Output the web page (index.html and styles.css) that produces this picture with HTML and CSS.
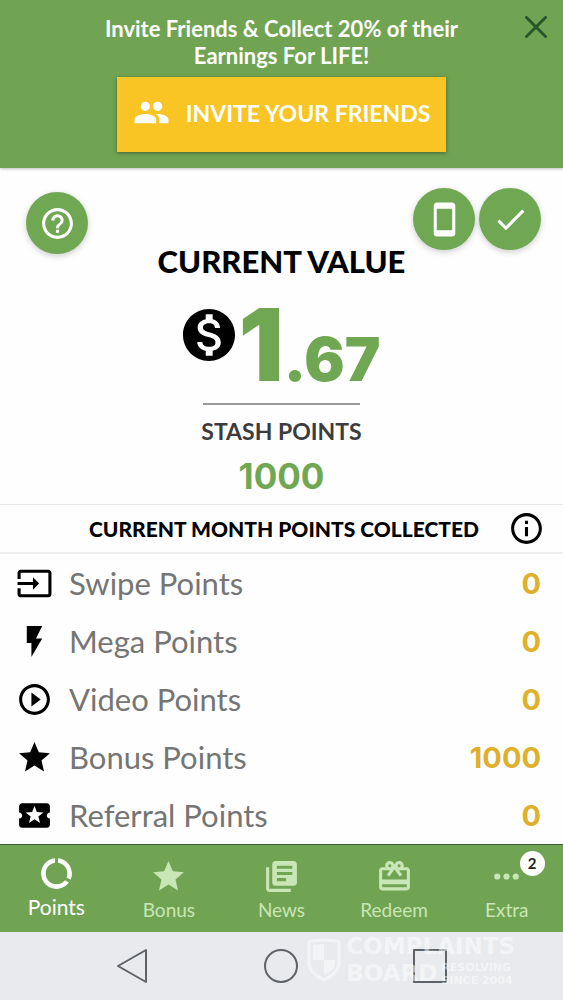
FILE: index.html
```html
<!DOCTYPE html>
<html lang="en">
<head>
<meta charset="utf-8">
<meta name="viewport" content="width=device-width, initial-scale=1">
<title>Points</title>
<link rel="stylesheet" href="styles.css">
</head>
<body>
<svg class="sprite" aria-hidden="true">
  <symbol id="star" viewBox="0 0 24 24"><path d="M12 17.27L18.18 21l-1.64-7.03L22 9.24l-7.19-.61L12 2 9.19 8.63 2 9.24l5.46 4.73L5.82 21z"/></symbol>
</svg>

<header class="promo">
  <p class="promo-text">Invite Friends &amp; Collect 20% of their Earnings For LIFE!</p>
  <button class="invite" type="button">
    <svg class="icon" viewBox="0 0 24 24" aria-hidden="true"><path d="M16 11c1.66 0 2.99-1.34 2.99-3S17.66 5 16 5c-1.66 0-3 1.34-3 3s1.34 3 3 3zm-8 0c1.66 0 2.99-1.34 2.99-3S9.66 5 8 5C6.34 5 5 6.34 5 8s1.34 3 3 3zm0 2c-2.33 0-7 1.17-7 3.5V19h14v-2.5c0-2.33-4.67-3.5-7-3.5zm8 0c-.29 0-.62.02-.97.05 1.16.84 1.97 1.97 1.97 3.45V19h6v-2.5c0-2.33-4.67-3.5-7-3.5z"/></svg>
    <span>INVITE YOUR FRIENDS</span>
  </button>
  <button class="close" type="button" aria-label="Close">
    <svg viewBox="0 0 22 22" aria-hidden="true"><path d="M1.5 1.5l19 19M20.5 1.5l-19 19"/></svg>
  </button>
</header>

<main class="content">
  <section class="summary">
    <div class="summary-head">
      <div class="fabs fabs-left">
        <button class="fab" type="button" aria-label="Help"><svg class="icon" viewBox="0 0 24 24" aria-hidden="true"><path d="M11 18h2v-2h-2v2zm1-16C6.48 2 2 6.48 2 12s4.48 10 10 10 10-4.48 10-10S17.52 2 12 2zm0 18c-4.41 0-8-3.59-8-8s3.59-8 8-8 8 3.59 8 8-3.59 8-8 8zm0-14c-2.21 0-4 1.79-4 4h2c0-1.1.9-2 2-2s2 .9 2 2c0 2-3 1.75-3 5h2c0-2.25 3-2.5 3-5 0-2.21-1.79-4-4-4z"/></svg></button>
      </div>
      <h1 class="title">CURRENT VALUE</h1>
      <div class="fabs fabs-right">
        <button class="fab" type="button" aria-label="Device"><svg class="icon" viewBox="0 0 24 24" aria-hidden="true"><path d="M17 1.01L7 1c-1.1 0-1.99.9-1.99 2v18c0 1.1.89 2 1.99 2h10c1.1 0 2-.9 2-2V3c0-1.1-.9-1.99-2-1.99zM17 19H7V5h10v14z"/></svg></button>
        <button class="fab" type="button" aria-label="Confirm"><svg class="icon" viewBox="0 0 24 24" aria-hidden="true"><path d="M9 16.17L4.83 12l-1.42 1.41L9 19 21 7l-1.41-1.41z"/></svg></button>
      </div>
    </div>
    <div class="value">
      <svg class="dollar" viewBox="2 2 20 20" role="img" aria-label="Dollars"><path d="M12 2C6.48 2 2 6.48 2 12s4.48 10 10 10 10-4.48 10-10S17.52 2 12 2zm1.41 16.09V20h-2.67v-1.93c-1.71-.36-3.16-1.46-3.27-3.4h1.96c.1 1.05.82 1.87 2.65 1.87 1.96 0 2.4-.98 2.4-1.59 0-.83-.44-1.61-2.67-2.14-2.48-.6-4.18-1.62-4.18-3.67 0-1.72 1.39-2.84 3.11-3.21V4h2.67v1.95c1.86.45 2.79 1.86 2.85 3.39H14.3c-.05-1.11-.64-1.87-2.22-1.87-1.5 0-2.4.68-2.4 1.64 0 .84.65 1.39 2.67 1.91s4.18 1.39 4.18 3.91c-.01 1.83-1.38 2.83-3.12 3.16z"/></svg>
      <span class="amount"><span class="whole">1</span><span class="cents">.67</span></span>
    </div>
    <hr class="rule">
    <h2 class="stash-label">STASH POINTS</h2>
    <p class="stash-total">1000</p>
  </section>

  <section class="collected">
    <div class="collected-head">
      <h2 class="collected-title">CURRENT MONTH POINTS COLLECTED</h2>
      <button class="info" type="button" aria-label="About these points"><svg class="icon" viewBox="0 0 24 24" aria-hidden="true"><path d="M11 17h2v-6h-2v6zm1-15C6.48 2 2 6.48 2 12s4.48 10 10 10 10-4.48 10-10S17.52 2 12 2zm0 18c-4.41 0-8-3.59-8-8s3.59-8 8-8 8 3.59 8 8-3.59 8-8 8zM11 9h2V7h-2v2z"/></svg></button>
    </div>
    <ul class="rows">
      <li class="row"><svg class="icon" viewBox="0 0 24 24" aria-hidden="true"><path d="M21 3.01H3c-1.1 0-2 .9-2 2V9h2V4.99h18v14.03H3V15H1v4.01c0 1.1.9 1.98 2 1.98h18c1.1 0 2-.88 2-1.98v-14c0-1.11-.9-2-2-2zM11 16l4-4-4-4v3H1v2h10v3z"/></svg><span class="name">Swipe Points</span><span class="points">0</span></li>
      <li class="row"><svg class="icon" viewBox="0 0 24 24" aria-hidden="true"><path d="M7 2v11h3v9l7-12h-4l4-8z"/></svg><span class="name">Mega Points</span><span class="points">0</span></li>
      <li class="row"><svg class="icon" viewBox="0 0 24 24" aria-hidden="true"><path d="M10 16.5l6-4.5-6-4.5v9zM12 2C6.48 2 2 6.48 2 12s4.48 10 10 10 10-4.48 10-10S17.52 2 12 2zm0 18c-4.41 0-8-3.59-8-8s3.59-8 8-8 8 3.59 8 8-3.59 8-8 8z"/></svg><span class="name">Video Points</span><span class="points">0</span></li>
      <li class="row"><svg class="icon" aria-hidden="true"><use href="#star"/></svg><span class="name">Bonus Points</span><span class="points">1000</span></li>
      <li class="row"><svg class="icon" viewBox="0 0 24 24" aria-hidden="true"><path d="M20 12c0-1.1.9-2 2-2V6c0-1.1-.9-2-2-2H4c-1.1 0-1.99.9-1.99 2v4c1.1 0 1.99.9 1.99 2s-.89 2-2 2v4c0 1.1.9 2 2 2h16c1.1 0 2-.9 2-2v-4c-1.1 0-2-.9-2-2zm-4.42 4.8L12 14.5l-3.58 2.3 1.08-4.12-3.29-2.69 4.24-.25L12 5.8l1.54 3.95 4.24.25-3.29 2.69 1.09 4.11z"/></svg><span class="name">Referral Points</span><span class="points">0</span></li>
    </ul>
  </section>
</main>

<nav class="tabs">
  <a class="tab tab-active" href="#points" aria-current="page"><svg class="icon" viewBox="0 0 24 24" aria-hidden="true"><path d="M13 2.05v3.03c3.39.49 6 3.39 6 6.92 0 .9-.18 1.75-.48 2.54l2.6 1.53c.56-1.24.88-2.62.88-4.07 0-5.18-3.95-9.45-9-9.95zM12 19c-3.87 0-7-3.13-7-7 0-3.53 2.61-6.43 6-6.92V2.05c-5.06.5-9 4.76-9 9.95 0 5.52 4.47 10 9.99 10 3.31 0 6.24-1.61 8.06-4.09l-2.6-1.53C16.17 17.98 14.21 19 12 19z"/></svg><span>Points</span></a>
  <a class="tab" href="#bonus"><svg class="icon" aria-hidden="true"><use href="#star"/></svg><span>Bonus</span></a>
  <a class="tab" href="#news"><svg class="icon" viewBox="0 0 24 24" aria-hidden="true"><path d="M4 6H2v14c0 1.1.9 2 2 2h14v-2H4V6zm16-4H8c-1.1 0-2 .9-2 2v12c0 1.1.9 2 2 2h12c1.1 0 2-.9 2-2V4c0-1.1-.9-2-2-2zm-1 9H9V9h10v2zm-4 4H9v-2h6v2zm4-8H9V5h10v2z"/></svg><span>News</span></a>
  <a class="tab" href="#redeem"><svg class="icon" viewBox="0 0 24 24" aria-hidden="true"><path d="M20 6h-2.18c.11-.31.18-.65.18-1 0-1.66-1.34-3-3-3-1.05 0-1.96.54-2.5 1.35l-.5.67-.5-.68C10.96 2.54 10.05 2 9 2 7.34 2 6 3.34 6 5c0 .35.07.69.18 1H4c-1.11 0-1.99.89-1.99 2L2 19c0 1.11.89 2 2 2h16c1.11 0 2-.89 2-2V8c0-1.11-.89-2-2-2zm-5-2c.55 0 1 .45 1 1s-.45 1-1 1-1-.45-1-1 .45-1 1-1zM9 4c.55 0 1 .45 1 1s-.45 1-1 1-1-.45-1-1 .45-1 1-1zm11 15H4v-2h16v2zm0-5H4V8h5.08L7 10.83 8.62 12 11 8.76l1-1.36 1 1.36L15.38 12 17 10.83 14.92 8H20v6z"/></svg><span>Redeem</span></a>
  <a class="tab" href="#extra"><svg class="icon" viewBox="0 0 24 24" aria-hidden="true"><circle cx="6" cy="12" r="2"/><circle cx="12" cy="12" r="2"/><circle cx="18" cy="12" r="2"/></svg><span>Extra</span><span class="badge">2</span></a>
</nav>

<footer class="system">
  <button class="key" type="button" aria-label="Back"><svg viewBox="0 0 36 36" aria-hidden="true"><path d="M31 2v32L3 18z"/></svg></button>
  <button class="key" type="button" aria-label="Home"><svg viewBox="0 0 36 36" aria-hidden="true"><circle cx="17" cy="18" r="16"/></svg></button>
  <button class="key" type="button" aria-label="Recent apps"><svg viewBox="0 0 36 36" aria-hidden="true"><path d="M1 2h32v32H1z"/></svg></button>
  <div class="watermark">
    <svg class="shield" viewBox="0 0 36 44" aria-hidden="true"><path class="shield-line" d="M18 2c5 0 10 0 15 2v21c0 8-7 13-15 17C10 38 3 33 3 25V4c5-2 10-2 15-2z"/><path d="M18 6v16H7V7c4-1 7-1 11-1zM18 22h11v3c0 6-5 9-11 12z"/></svg>
    <div class="mark-text">
      <div class="mark-big">COMPLAINTS</div>
      <div class="mark-line"><span class="mark-big">BOARD</span><span class="mark-small">RESOLVING<br>SINCE 2004</span></div>
    </div>
  </div>
</footer>
</body>
</html>
```

FILE: styles.css
```css
* { box-sizing: border-box; margin: 0; padding: 0; }

body {
  display: flex;
  flex-direction: column;
  min-height: 100vh;
  background: #fefefe;
  color: #000;
  font-family: Lato, "Open Sans", sans-serif;
}

button { border: 0; background: none; color: inherit; font: inherit; }
.sprite { position: absolute; width: 0; height: 0; }
.icon { display: block; width: 37px; height: 37px; fill: currentColor; flex: none; }

.promo {
  position: relative;
  display: flex;
  flex-direction: column;
  align-items: center;
  gap: 8px;
  padding: 15px 64px 16px;
  background: #70a453;
  color: #fff;
  box-shadow: 0 1px 3px rgba(0, 0, 0, .25);
}
.promo-text {
  max-width: 400px;
  font-size: 22px;
  font-weight: 700;
  line-height: 27px;
  text-align: center;
}
.invite {
  display: flex;
  align-items: center;
  gap: 16px;
  padding: 17px 16px 21px;
  background: #f8c524;
  box-shadow: 0 1px 4px rgba(0, 0, 0, .4);
  font-size: 23px;
  font-weight: 700;
}
.close { position: absolute; top: 16px; right: 16px; width: 22px; height: 22px; }
.close svg { display: block; fill: none; stroke: #26562b; stroke-width: 3; stroke-linecap: round; }

.content { flex: 1; }
.summary { text-align: center; padding-bottom: 10px; }
.summary-head {
  display: grid;
  grid-template-columns: 1fr auto 1fr;
  padding: 20px 22px 0;
}
.fabs { display: flex; gap: 4px; }
.fabs-left { padding: 4px 0 0 4px; }
.fabs-right { justify-content: flex-end; }
.fab {
  display: grid;
  place-items: center;
  flex: none;
  width: 62px;
  height: 62px;
  border-radius: 50%;
  background: #70a753;
  color: #fff;
  box-shadow: 0 2px 6px rgba(0, 0, 0, .2);
}
.title { padding-top: 55px; font-size: 31px; font-weight: 900; line-height: 36px; }

.value { display: flex; justify-content: center; gap: 4px; padding-top: 30px; height: 124px; }
.dollar { width: 52px; height: 52px; }
.amount { display: flex; align-items: baseline; color: #70a753; font-family: Inter, sans-serif; font-weight: 900; line-height: 72px; }
.whole { font-size: 100px; }
.cents { font-size: 60px; }
.rule { width: 157px; margin: 0 auto; border: 0; border-top: 2px solid #999; }
.stash-label {
  padding-top: 11px;
  color: #3c3c3e;
  font-size: 23px;
  font-weight: 700;
  line-height: 30px;
}
.stash-total { padding-top: 12px; color: #70a753; font-family: Inter, sans-serif; font-size: 35px; font-weight: 700; line-height: 36px; }

.collected-head {
  display: flex;
  align-items: center;
  justify-content: flex-end;
  gap: 29px;
  height: 50px;
  padding-right: 18px;
  border-top: 1px solid #e8e8e8;
  border-bottom: 2px solid #eee;
}
.collected-title { font-size: 21px; font-weight: 900; }
.rows { list-style: none; }
.row { display: flex; align-items: center; gap: 16px; height: 58px; padding: 0 22px 0 16px; }
.name { flex: 1; color: #757575; font-size: 31px; }
.points { color: #deb02c; font-family: Inter, sans-serif; font-size: 29px; font-weight: 700; }

.tabs {
  display: grid;
  grid-template-columns: repeat(5, 1fr);
  height: 88px;
  border-top: 1px solid #3d5f31;
  background: #70a453;
}
.tab {
  position: relative;
  display: flex;
  flex-direction: column;
  align-items: center;
  padding-top: 13px;
  color: #c9e6b6;
  font-size: 19px;
  line-height: 30px;
  text-decoration: none;
}
.tab-active { padding-top: 10px; color: #fff; font-size: 21px; }
.badge {
  position: absolute;
  top: 6px;
  left: calc(50% + 13px);
  width: 25px;
  height: 25px;
  border-radius: 50%;
  background: #fff;
  color: #222;
  font-size: 15px;
  font-weight: 700;
  line-height: 25px;
  text-align: center;
}

.system {
  position: relative;
  display: flex;
  align-items: center;
  justify-content: center;
  gap: 113px;
  height: 68px;
  background: #e8eaed;
}
.key { width: 36px; height: 36px; }
.key svg { display: block; fill: none; stroke: #5f6368; stroke-width: 2; stroke-linejoin: round; }
.watermark {
  position: absolute;
  top: 1px;
  right: 48px;
  display: flex;
  align-items: center;
  gap: 4px;
  color: #fff;
  font-family: "DejaVu Sans", sans-serif;
  font-weight: 700;
  opacity: .5;
  pointer-events: none;
}
.shield { width: 36px; height: 44px; fill: #fff; }
.shield-line { fill: none; stroke: #fff; stroke-width: 3; }
.mark-big { font-size: 23px; line-height: 27px; }
.mark-line { display: flex; align-items: center; gap: 4px; }
.mark-small { font-size: 11px; line-height: 13px; }
```
